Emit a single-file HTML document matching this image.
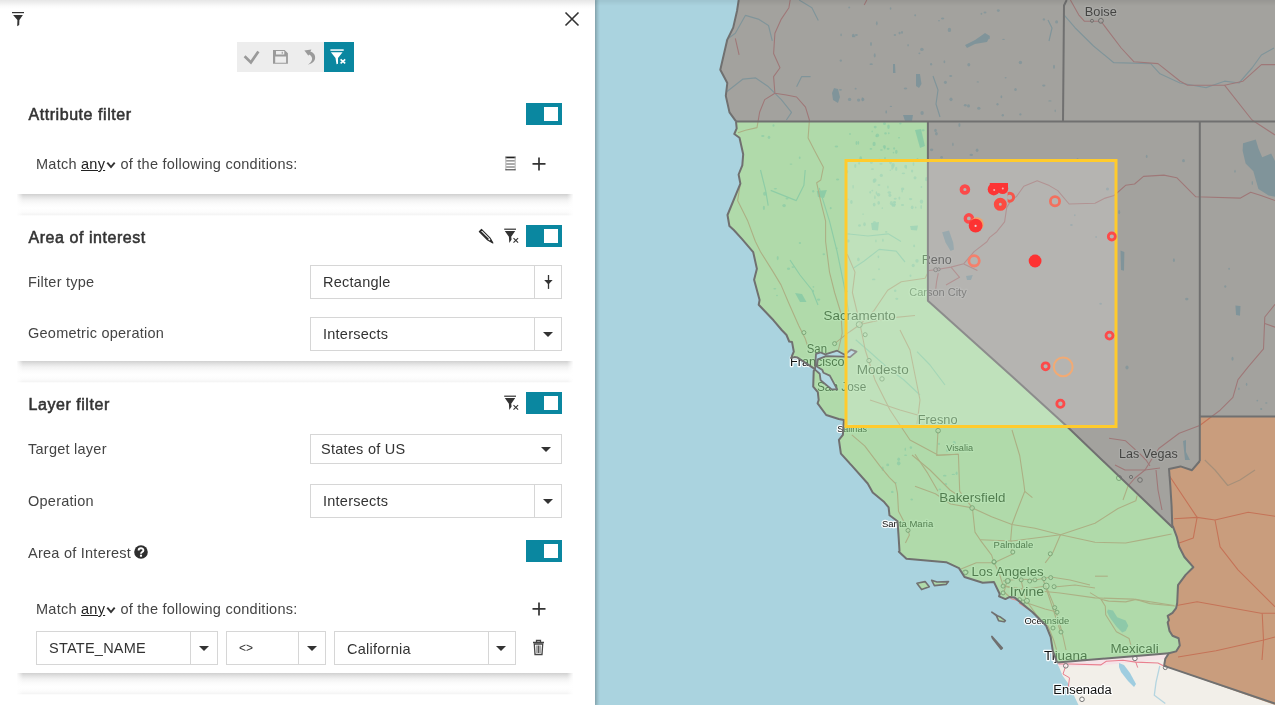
<!DOCTYPE html>
<html><head><meta charset="utf-8">
<style>
*{box-sizing:border-box;margin:0;padding:0}
html,body{width:1275px;height:705px;overflow:hidden;background:#fff;font-family:"Liberation Sans",sans-serif;color:#333}
#panel{position:absolute;left:0;top:0;width:595px;height:705px;background:#fff;z-index:2;box-shadow:1px 0 3px rgba(0,0,0,.15);will-change:transform}
#panel .topsh{position:absolute;left:0;top:0;width:595px;height:9px;background:linear-gradient(#e6e6e6,#fbfbfb 70%,#fff)}
.a{position:absolute;white-space:nowrap}
.t16{font-size:16px;line-height:18px;font-weight:normal;color:#333;letter-spacing:0.55px;-webkit-text-stroke:0.55px #333}
.t14{font-size:14.5px;line-height:16px;color:#444;letter-spacing:0.25px}
.sep{position:absolute;left:17px;width:556px;height:22px;background:linear-gradient(#d0d0d0 0px,#e3e3e3 3px,#f2f2f2 6px,#fbfbfb 10px,#fff 14px,#fcfcfc 18px,#f5f5f5 20.5px,#fff 22px)}
.sep::before{content:"";position:absolute;left:0;top:0;width:6px;height:22px;background:linear-gradient(to right,rgba(255,255,255,.9),rgba(255,255,255,0))}
.sep::after{content:"";position:absolute;right:0;top:0;width:6px;height:22px;background:linear-gradient(to left,rgba(255,255,255,.9),rgba(255,255,255,0))}
.tog{position:absolute;width:36px;height:22px;background:#0a87a0}
.tog::after{content:"";position:absolute;left:18px;top:4px;width:14px;height:14px;background:#fff}
.sel{position:absolute;border:1px solid #d6d6d6;background:#fff}
.sel .dv{position:absolute;top:0;bottom:0;width:1px;background:#d6d6d6}
.car{position:absolute;width:0;height:0;border-left:5px solid transparent;border-right:5px solid transparent;border-top:5px solid #333}
#map{position:absolute;left:595px;top:0;width:680px;height:705px;overflow:hidden;z-index:1;background:#aad3df;will-change:transform}
#mapsh{position:absolute;left:595px;top:0;width:680px;height:6px;z-index:3;background:linear-gradient(rgba(0,0,0,.07),rgba(0,0,0,0))}
</style></head><body>
<div id="panel">
  <div class="topsh"></div>
  <!-- top-left funnel -->
  <svg class="a" style="left:11px;top:11px" width="15" height="17" viewBox="0 0 15 17">
    <rect x="1" y="1" width="12" height="1.2" fill="#333"/>
    <path d="M2.1 3.9 H11.9 L8.4 9 L8.2 13.9 L6.2 15.3 L6.4 9 Z" fill="#333"/>
  </svg>
  <!-- close X -->
  <svg class="a" style="left:564px;top:11px" width="16" height="16" viewBox="0 0 16 16">
    <path d="M1.5 1.5 L14.5 14.5 M14.5 1.5 L1.5 14.5" stroke="#333" stroke-width="1.6" fill="none"/>
  </svg>
  <!-- toolbar -->
  <div class="a" style="left:237px;top:42px;width:87px;height:30px;background:#ededed"></div>
  <div class="a" style="left:324px;top:42px;width:30px;height:30px;background:#0a87a0"></div>
  <svg class="a" style="left:237px;top:42px" width="117" height="30" viewBox="0 0 117 30">
    <path d="M7.6 14.2 L13.9 20.4 L21.4 9.4" stroke="#9a9a9a" stroke-width="2.7" fill="none"/>
    <path fill-rule="evenodd" fill="#9a9a9a" d="M36 7.9 H47.6 L50.9 11.2 V21.8 H36 Z M39 9 H47.3 V12.6 H39 Z M38.2 14.5 H49.1 V20.8 H38.2 Z"/>
    <rect x="44.7" y="9.8" width="1.1" height="2" fill="#9a9a9a"/>
    <path d="M67.4 8.4 L74.4 7.4 L71.4 13.8 Z" fill="#9a9a9a"/>
    <path d="M71 12.3 L72.4 9.3 C 76.8 10.2, 78.6 13.5, 78.1 16.6 C 77.5 19.8, 74.5 22, 70.9 22.8 C 73.6 20.6, 75.3 18.6, 75.1 16.4 C 74.9 14.4, 73.4 12.9, 71 12.3 Z" fill="#9a9a9a"/>
    <rect x="93.4" y="7.3" width="13.3" height="1.5" fill="#fff"/>
    <path d="M93.9 10.3 H105.6 L101 15.9 V21.8 L99.5 22.2 L98.5 15.9 Z" fill="#fff"/>
    <path d="M103.6 17.4 L108.2 21.4 M108.2 17.4 L103.6 21.4" stroke="#fff" stroke-width="1.6"/>
  </svg>

  <!-- Card 1: Attribute filter -->
  <div class="a t16" style="left:28.5px;top:106px">Attribute filter</div>
  <div class="tog" style="left:526px;top:103px"></div>
  <div class="a t14" style="left:36px;top:156px">Match <span style="text-decoration:underline;color:#222">any</span><svg width="10" height="8" viewBox="0 0 10 8" style="margin-left:1px"><path d="M1.3 1.6 L5 6 L8.7 1.6" stroke="#333" stroke-width="1.9" fill="none"/></svg> of the following conditions:</div>
  <svg class="a" style="left:504.5px;top:155.5px" width="11" height="15" viewBox="0 0 11 15">
    <rect x="0.4" y="0.6" width="10.2" height="1.7" fill="#222"/>
    <rect x="0.4" y="0.6" width="0.9" height="13.7" fill="#aaa"/>
    <rect x="9.7" y="0.6" width="0.9" height="13.7" fill="#aaa"/>
    <rect x="0.4" y="13.3" width="10.2" height="1" fill="#333"/>
    <path d="M1.3 4.9 H9.7 M1.3 8 H9.7 M1.3 11 H9.7" stroke="#444" stroke-width="0.9"/>
  </svg>
  <svg class="a" style="left:532px;top:156.5px" width="14" height="14" viewBox="0 0 14 14">
    <path d="M7 0.5 V13.5 M0.5 6.8 H13.5" stroke="#333" stroke-width="1.7"/>
  </svg>
  <div class="sep" style="top:194px"></div>

  <!-- Card 2: Area of interest -->
  <div class="a t16" style="left:28.5px;top:229px">Area of interest</div>
  <svg class="a" style="left:472px;top:222px" width="52" height="26" viewBox="0 0 52 26">
    <path d="M7.3 9.6 L9.5 7.4 L17.9 15.8 L20.9 21 L15.7 18 Z" fill="none" stroke="#2a2a2a" stroke-width="1.1" stroke-linejoin="round"/>
    <path d="M7.3 9.6 L8.4 8.5 L17 17 L15.7 18 Z" fill="#2a2a2a"/>
    <path d="M17.3 19 L20.9 21 L19 17.3 Z" fill="#2a2a2a"/>
    <rect x="32.2" y="6.6" width="11.8" height="1.2" fill="#333"/>
    <path d="M32.8 9.1 H43.2 L39.2 14.7 L39.6 17.6 L37.3 20.9 L36.9 14.7 Z" fill="#333"/>
    <path d="M41.5 16.2 L46.1 20.6 M46.1 16.2 L41.5 20.6" stroke="#333" stroke-width="1.15"/>
  </svg>
  <div class="tog" style="left:526px;top:225px"></div>
  <div class="a t14" style="left:28px;top:274px">Filter type</div>
  <div class="sel" style="left:310px;top:265px;width:252px;height:34px"><div class="dv" style="left:223px"></div></div>
  <div class="a t14" style="left:323px;top:274px;color:#333">Rectangle</div>
  <svg class="a" style="left:543px;top:274px" width="11" height="16" viewBox="0 0 11 16">
    <path d="M5.5 1 V14.9" stroke="#333" stroke-width="1.3"/>
    <path d="M1.2 5.9 H9.6 L5.4 10.4 Z" fill="#333"/>
  </svg>
  <div class="a t14" style="left:28px;top:325px">Geometric operation</div>
  <div class="sel" style="left:310px;top:317px;width:252px;height:34px"><div class="dv" style="left:223px"></div></div>
  <div class="a t14" style="left:323px;top:326px;color:#333">Intersects</div>
  <div class="car" style="left:543px;top:332px"></div>
  <div class="sep" style="top:361px"></div>

  <!-- Card 3: Layer filter -->
  <div class="a t16" style="left:28.5px;top:396px">Layer filter</div>
  <svg class="a" style="left:472px;top:389px" width="52" height="26" viewBox="0 0 52 26">
    <rect x="32.2" y="6.6" width="11.8" height="1.2" fill="#333"/>
    <path d="M32.8 9.1 H43.2 L39.2 14.7 L39.6 17.6 L37.3 20.9 L36.9 14.7 Z" fill="#333"/>
    <path d="M41.5 16.2 L46.1 20.6 M46.1 16.2 L41.5 20.6" stroke="#333" stroke-width="1.15"/>
  </svg>
  <div class="tog" style="left:526px;top:392px"></div>
  <div class="a t14" style="left:28px;top:441px">Target layer</div>
  <div class="sel" style="left:310px;top:434px;width:252px;height:30px"></div>
  <div class="a t14" style="left:321px;top:441px;color:#333">States of US</div>
  <div class="car" style="left:541px;top:447px"></div>
  <div class="a t14" style="left:28px;top:493px">Operation</div>
  <div class="sel" style="left:310px;top:484px;width:252px;height:34px"><div class="dv" style="left:223px"></div></div>
  <div class="a t14" style="left:323px;top:493px;color:#333">Intersects</div>
  <div class="car" style="left:543px;top:499px"></div>
  <div class="a t14" style="left:28px;top:545px">Area of Interest <svg width="14" height="14" viewBox="0 0 14 14" style="vertical-align:-1.4px;margin-left:-1.2px"><circle cx="7" cy="7" r="6.8" fill="#2e2e2e"/><path d="M4.6 5.4 C4.6 2.5 9.4 2.5 9.4 5.2 C9.4 7.1 7 7 7 8.8" stroke="#fff" stroke-width="1.9" fill="none"/><rect x="5.95" y="9.7" width="2.1" height="2" fill="#fff"/></svg></div>
  <div class="tog" style="left:526px;top:540px"></div>
  <div class="a t14" style="left:36px;top:601px">Match <span style="text-decoration:underline;color:#222">any</span><svg width="10" height="8" viewBox="0 0 10 8" style="margin-left:1px"><path d="M1.3 1.6 L5 6 L8.7 1.6" stroke="#333" stroke-width="1.9" fill="none"/></svg> of the following conditions:</div>
  <svg class="a" style="left:532px;top:601.5px" width="14" height="14" viewBox="0 0 14 14">
    <path d="M7 0.5 V13.5 M0.5 6.8 H13.5" stroke="#333" stroke-width="1.7"/>
  </svg>
  <div class="sel" style="left:36px;top:631px;width:182px;height:34px"><div class="dv" style="left:153px"></div></div>
  <div class="a t14" style="left:49px;top:640px;color:#333">STATE_NAME</div>
  <div class="car" style="left:199px;top:646px"></div>
  <div class="sel" style="left:226px;top:631px;width:100px;height:34px"><div class="dv" style="left:71px"></div></div>
  <div class="a" style="left:239px;top:640px;font-size:12px;line-height:16px;color:#333">&lt;&gt;</div>
  <div class="car" style="left:307px;top:646px"></div>
  <div class="sel" style="left:334px;top:631px;width:182px;height:34px"><div class="dv" style="left:153px"></div></div>
  <div class="a t14" style="left:347px;top:641px;color:#333">California</div>
  <div class="car" style="left:496px;top:646px"></div>
  <svg class="a" style="left:532px;top:639px" width="13" height="17" viewBox="0 0 13 17">
    <path d="M1 3.5 H12 M4.5 3.5 V1.5 H8.5 V3.5" stroke="#444" stroke-width="1.3" fill="none"/>
    <path d="M2.3 5 H10.7 L10 15.5 H3 Z" fill="none" stroke="#444" stroke-width="1.3"/>
    <path d="M5 6.5 V14 M6.5 6.5 V14 M8 6.5 V14" stroke="#444" stroke-width="0.9"/>
  </svg>
  <div class="sep" style="top:673px"></div>
</div>

<div id="map">
<svg width="680" height="705" viewBox="595 0 680 705" style="position:absolute;left:0;top:0">
<defs><linearGradient id="lsh" x1="0" x2="1"><stop offset="0" stop-color="#000" stop-opacity=".14"/><stop offset="1" stop-color="#000" stop-opacity="0"/></linearGradient></defs>
<polygon fill="#f2efe9" points="738.7,0 737,11 733.2,27.6 727.3,39.6 720.3,69.7 727.3,83 725.8,95.9 729.5,112.4 736,121.4 736,121.4 736.7,128.4 734.3,134 739.5,137.7 743.2,154.2 742.3,165.3 738.6,174.5 740.4,183.7 727.5,215 729.4,226 733.8,230 742.1,239.2 753.2,252.1 756.9,268.7 754.1,279.8 759.6,300 758.7,304.7 773.5,320.3 781.7,330 786.5,335 789.2,341.5 792,341.9 793.8,351.6 791.1,358 794.3,357.1 797.5,357.6 812.3,367.3 815,369.6 813.7,371 813.2,386.7 817.8,392.2 818.7,400 817.6,403.3 826.2,415 838.7,419 843.9,420 842.9,434.9 838.9,439.8 840.9,453.7 851.8,465.7 867.7,483.5 872.7,492.4 883.6,501.4 888.6,507.3 889.5,515.3 897.5,521.2 898.5,535.1 899.5,551 898.9,551.7 906.4,558.7 946.1,562.2 959,568.1 964.5,577 982.7,582.7 994,582.1 999.7,594 999.1,596.3 1005.4,599.1 1009.9,596.9 1014.4,597.4 1032.6,612.2 1046.2,625.8 1050.7,637.1 1052.8,650.9 1057.2,662.5 1062.6,675.8 1067.9,682.9 1078.5,705 1275,705 1275,0"/>
<g fill="#a0cfe0"><polygon points="965,45 975,40 985,33 990,36 987,42 975,44 967,48"/><polygon points="916,74 920,74 921.5,84 919,88 916,86"/><polygon points="834,88 838,89 840,97 838,103 833,100 832,93"/><polygon points="1243,143.2 1255.8,139.4 1258.4,148.3 1262.2,157.2 1271.2,153.4 1275,161 1275,196.8 1268.6,195.5 1258.4,189.1 1253.3,171.3 1245.6,163.6 1242.6,150.8"/><polygon points="816.7,191 826.9,190 824,198 818,197"/><polygon points="795,293 802,294 806.5,302 800,302"/><polygon points="1235.4,305.5 1240.5,306 1240,315.7 1236,315"/><polygon points="1120.5,250.4 1124.4,252 1124,270.8 1121,270"/><polygon points="903,115 913,115 912,121 905,121"/><polygon points="915,130 921,129 925,146 920,148"/><polygon points="1183,441 1186,440 1186,452 1190,460 1185,460"/><polygon points="893,64 895,64 895.5,73 893,73"/><polygon points="942.1,232.3 949,230.6 953.2,242.6 954,249.4 950.6,251 945.5,242.6"/><polygon points="966,276 972.8,275 971,280 967,280"/><polygon points="910,226 918,225.5 917,230.6 911,230"/><polygon points="871,223 879,222 878,230.6 872,230"/><polygon points="891,203.4 896,204 895,206.8 892,206.5"/></g>
<g fill="#a0cfe0" fill-opacity=".8"><ellipse cx="870.9" cy="148.9" rx="1.4" ry="0.8"/><ellipse cx="887.9" cy="187.1" rx="0.8" ry="1.5"/><ellipse cx="848.0" cy="199.2" rx="0.8" ry="0.8"/><ellipse cx="879.0" cy="269.2" rx="0.8" ry="1.0"/><ellipse cx="895.2" cy="290.7" rx="1.3" ry="1.3"/><ellipse cx="923.1" cy="130.3" rx="1.6" ry="1.1"/><ellipse cx="856.5" cy="143.0" rx="1.0" ry="1.9"/><ellipse cx="859.5" cy="225.5" rx="1.4" ry="1.3"/><ellipse cx="888.8" cy="133.2" rx="0.8" ry="1.0"/><ellipse cx="899.4" cy="198.1" rx="1.0" ry="1.6"/><ellipse cx="881.3" cy="175.4" rx="1.6" ry="1.7"/><ellipse cx="864.5" cy="224.2" rx="1.3" ry="2.0"/><ellipse cx="903.4" cy="173.3" rx="1.8" ry="0.9"/><ellipse cx="878.4" cy="256.8" rx="0.9" ry="1.4"/><ellipse cx="848.1" cy="240.9" rx="1.5" ry="1.6"/><ellipse cx="915.0" cy="177.8" rx="1.5" ry="1.6"/><ellipse cx="891.4" cy="203.2" rx="1.6" ry="2.1"/><ellipse cx="882.9" cy="240.2" rx="0.8" ry="1.8"/><ellipse cx="896.8" cy="298.8" rx="1.6" ry="1.1"/><ellipse cx="875.9" cy="241.0" rx="0.7" ry="1.4"/><ellipse cx="858.4" cy="142.8" rx="0.8" ry="1.9"/><ellipse cx="855.3" cy="166.1" rx="1.1" ry="2.0"/><ellipse cx="851.4" cy="202.0" rx="1.3" ry="2.0"/><ellipse cx="910.5" cy="275.8" rx="1.0" ry="1.3"/><ellipse cx="873.7" cy="279.4" rx="1.8" ry="0.9"/><ellipse cx="859.1" cy="163.3" rx="1.0" ry="1.4"/><ellipse cx="892.1" cy="168.8" rx="0.7" ry="1.3"/><ellipse cx="874.5" cy="222.8" rx="1.7" ry="1.7"/><ellipse cx="886.2" cy="231.9" rx="1.4" ry="0.8"/><ellipse cx="917.0" cy="260.8" rx="1.7" ry="1.9"/><ellipse cx="876.4" cy="193.0" rx="0.8" ry="1.7"/><ellipse cx="850.0" cy="134.0" rx="0.9" ry="0.9"/><ellipse cx="872.2" cy="131.4" rx="0.7" ry="0.9"/><ellipse cx="853.1" cy="186.7" rx="0.7" ry="2.0"/><ellipse cx="894.1" cy="148.4" rx="1.0" ry="1.2"/><ellipse cx="874.1" cy="143.9" rx="1.6" ry="2.2"/><ellipse cx="882.3" cy="208.1" rx="0.8" ry="0.9"/><ellipse cx="872.4" cy="169.1" rx="1.6" ry="0.9"/><ellipse cx="846.8" cy="291.3" rx="1.3" ry="0.9"/><ellipse cx="888.5" cy="126.8" rx="1.3" ry="2.2"/><ellipse cx="914.1" cy="245.9" rx="1.0" ry="1.3"/><ellipse cx="858.4" cy="259.4" rx="1.3" ry="1.9"/><ellipse cx="871.4" cy="161.7" rx="1.6" ry="2.2"/><ellipse cx="913.2" cy="265.5" rx="1.6" ry="1.8"/><ellipse cx="863.1" cy="214.1" rx="1.1" ry="0.7"/><ellipse cx="847.2" cy="171.7" rx="1.0" ry="1.7"/><ellipse cx="921.5" cy="201.6" rx="1.7" ry="2.2"/><ellipse cx="921.4" cy="186.9" rx="0.9" ry="1.0"/><ellipse cx="860.7" cy="158.4" rx="1.4" ry="2.1"/><ellipse cx="912.2" cy="207.3" rx="1.4" ry="1.9"/><ellipse cx="874.9" cy="180.1" rx="1.7" ry="1.9"/><ellipse cx="913.5" cy="164.1" rx="0.9" ry="1.9"/><ellipse cx="889.3" cy="192.5" rx="1.8" ry="1.3"/><ellipse cx="893.3" cy="205.3" rx="1.5" ry="1.0"/><ellipse cx="877.4" cy="135.3" rx="1.7" ry="1.9"/><ellipse cx="878.5" cy="194.7" rx="1.8" ry="1.7"/><ellipse cx="890.3" cy="170.3" rx="0.8" ry="0.7"/><ellipse cx="926.3" cy="179.2" rx="1.3" ry="2.1"/><ellipse cx="895.2" cy="198.7" rx="1.6" ry="1.0"/><ellipse cx="884.6" cy="147.8" rx="1.0" ry="1.6"/><ellipse cx="885.0" cy="158.9" rx="0.8" ry="2.1"/><ellipse cx="890.5" cy="162.3" rx="1.3" ry="2.1"/><ellipse cx="894.4" cy="202.8" rx="1.3" ry="1.5"/><ellipse cx="900.4" cy="123.6" rx="1.2" ry="1.0"/><ellipse cx="870.2" cy="192.3" rx="0.9" ry="1.4"/><ellipse cx="912.1" cy="171.0" rx="1.1" ry="1.5"/><ellipse cx="902.2" cy="191.0" rx="0.8" ry="1.5"/><ellipse cx="884.4" cy="146.4" rx="1.5" ry="1.5"/><ellipse cx="902.6" cy="188.9" rx="1.7" ry="1.4"/><ellipse cx="905.5" cy="166.5" rx="1.3" ry="1.7"/><ellipse cx="896.2" cy="168.9" rx="1.2" ry="2.1"/><ellipse cx="910.6" cy="199.1" rx="1.7" ry="1.1"/><ellipse cx="902.5" cy="205.0" rx="1.6" ry="0.9"/><ellipse cx="877.1" cy="160.9" rx="0.8" ry="1.1"/><ellipse cx="874.2" cy="180.9" rx="1.6" ry="2.0"/><ellipse cx="879.0" cy="185.0" rx="1.4" ry="0.9"/><ellipse cx="921.2" cy="207.1" rx="0.9" ry="2.1"/><ellipse cx="893.1" cy="164.9" rx="1.8" ry="1.9"/><ellipse cx="879.4" cy="160.0" rx="1.3" ry="1.2"/><ellipse cx="881.4" cy="150.0" rx="1.5" ry="0.7"/><ellipse cx="902.1" cy="160.8" rx="0.7" ry="1.2"/><ellipse cx="906.2" cy="167.1" rx="0.8" ry="2.2"/><ellipse cx="915.7" cy="207.5" rx="0.8" ry="1.1"/><ellipse cx="872.3" cy="190.6" rx="1.0" ry="0.9"/><ellipse cx="894.5" cy="202.2" rx="1.6" ry="1.1"/><ellipse cx="878.7" cy="202.9" rx="1.3" ry="1.8"/><ellipse cx="875.2" cy="127.1" rx="1.5" ry="1.3"/><ellipse cx="874.2" cy="204.6" rx="1.4" ry="1.9"/><ellipse cx="874.9" cy="197.3" rx="0.8" ry="2.0"/><ellipse cx="896.3" cy="151.8" rx="1.3" ry="2.1"/><ellipse cx="885.5" cy="133.4" rx="1.3" ry="1.1"/><ellipse cx="876.3" cy="136.2" rx="0.8" ry="1.0"/><ellipse cx="888.1" cy="148.8" rx="1.5" ry="1.1"/><ellipse cx="899.0" cy="137.7" rx="1.1" ry="0.7"/><ellipse cx="884.5" cy="123.4" rx="1.5" ry="1.5"/><ellipse cx="881.0" cy="163.8" rx="1.7" ry="0.9"/><ellipse cx="917.5" cy="160.0" rx="1.2" ry="2.0"/><ellipse cx="892.8" cy="166.6" rx="1.5" ry="2.2"/><ellipse cx="889.9" cy="195.2" rx="1.5" ry="1.7"/><ellipse cx="893.5" cy="152.6" rx="0.8" ry="0.9"/><ellipse cx="855.6" cy="88.7" rx="1.0" ry="0.9"/><ellipse cx="858.6" cy="100.1" rx="1.7" ry="1.7"/><ellipse cx="902.0" cy="32.4" rx="1.0" ry="1.4"/><ellipse cx="874.7" cy="55.4" rx="1.0" ry="2.1"/><ellipse cx="1054.0" cy="66.8" rx="1.0" ry="2.1"/><ellipse cx="908.1" cy="45.3" rx="0.7" ry="1.3"/><ellipse cx="944.4" cy="61.8" rx="0.9" ry="1.5"/><ellipse cx="841.1" cy="34.9" rx="0.8" ry="1.3"/><ellipse cx="849.2" cy="7.5" rx="1.0" ry="1.0"/><ellipse cx="968.8" cy="64.8" rx="1.5" ry="1.7"/><ellipse cx="997.5" cy="104.3" rx="1.1" ry="1.2"/><ellipse cx="1056.6" cy="21.9" rx="1.5" ry="1.7"/><ellipse cx="849.6" cy="99.4" rx="1.7" ry="1.6"/><ellipse cx="1001.4" cy="96.8" rx="0.9" ry="1.5"/><ellipse cx="951.0" cy="99.3" rx="1.6" ry="1.9"/><ellipse cx="968.5" cy="105.9" rx="1.5" ry="1.7"/><ellipse cx="890.6" cy="8.5" rx="0.8" ry="1.2"/><ellipse cx="863.1" cy="99.4" rx="1.3" ry="1.6"/><ellipse cx="977.8" cy="81.9" rx="1.2" ry="0.7"/><ellipse cx="1015.5" cy="89.6" rx="1.3" ry="1.5"/><ellipse cx="985.0" cy="12.5" rx="1.5" ry="1.1"/><ellipse cx="856.4" cy="35.0" rx="1.5" ry="1.0"/><ellipse cx="1002.8" cy="115.3" rx="1.2" ry="1.3"/><ellipse cx="945.4" cy="82.3" rx="1.5" ry="1.6"/><ellipse cx="981.4" cy="13.8" rx="0.9" ry="1.1"/><ellipse cx="1003.5" cy="39.4" rx="1.3" ry="0.7"/><ellipse cx="853.3" cy="35.4" rx="1.4" ry="1.7"/><ellipse cx="988.7" cy="37.9" rx="1.3" ry="1.4"/><ellipse cx="942.6" cy="18.4" rx="1.7" ry="1.0"/><ellipse cx="1055.2" cy="110.8" rx="0.7" ry="1.4"/><ellipse cx="1020.4" cy="114.4" rx="1.2" ry="1.1"/><ellipse cx="886.2" cy="111.9" rx="0.9" ry="1.6"/><ellipse cx="871.2" cy="64.2" rx="1.7" ry="0.9"/><ellipse cx="1020.4" cy="62.5" rx="1.7" ry="1.8"/><ellipse cx="890.9" cy="106.4" rx="1.2" ry="0.7"/><ellipse cx="840.8" cy="60.6" rx="1.2" ry="1.2"/><ellipse cx="871.0" cy="43.9" rx="1.0" ry="2.0"/><ellipse cx="840.4" cy="89.8" rx="1.6" ry="0.9"/><ellipse cx="1043.8" cy="85.6" rx="1.7" ry="1.1"/><ellipse cx="921.9" cy="49.4" rx="1.8" ry="1.6"/><ellipse cx="919.4" cy="53.4" rx="1.0" ry="0.8"/><ellipse cx="862.4" cy="99.3" rx="1.0" ry="2.1"/><ellipse cx="894.9" cy="35.0" rx="1.3" ry="1.0"/><ellipse cx="922.1" cy="113.0" rx="1.7" ry="1.9"/><ellipse cx="978.8" cy="108.2" rx="1.7" ry="1.5"/><ellipse cx="998.3" cy="10.6" rx="1.5" ry="1.4"/><ellipse cx="1005.6" cy="77.8" rx="1.0" ry="0.8"/><ellipse cx="1043.9" cy="19.4" rx="1.2" ry="1.2"/><ellipse cx="905.5" cy="88.5" rx="1.8" ry="1.1"/><ellipse cx="984.3" cy="39.0" rx="1.3" ry="1.3"/><ellipse cx="876.8" cy="23.3" rx="0.9" ry="2.1"/><ellipse cx="949.4" cy="29.9" rx="1.7" ry="2.2"/><ellipse cx="939.0" cy="20.8" rx="0.9" ry="0.8"/><ellipse cx="915.2" cy="15.3" rx="1.0" ry="1.1"/><ellipse cx="965.3" cy="105.3" rx="1.5" ry="1.3"/><ellipse cx="931.1" cy="64.2" rx="1.1" ry="1.2"/><ellipse cx="853.7" cy="36.4" rx="1.8" ry="0.9"/><ellipse cx="950.7" cy="76.1" rx="1.6" ry="1.0"/><ellipse cx="899.6" cy="33.1" rx="1.1" ry="1.4"/><ellipse cx="1049.9" cy="100.9" rx="1.7" ry="0.7"/><ellipse cx="931.6" cy="149.8" rx="1.7" ry="1.4"/><ellipse cx="959.4" cy="125.0" rx="1.1" ry="2.1"/><ellipse cx="971.3" cy="154.9" rx="1.8" ry="1.1"/><ellipse cx="935.5" cy="130.4" rx="1.3" ry="1.7"/><ellipse cx="977.1" cy="150.3" rx="1.4" ry="1.8"/><ellipse cx="952.9" cy="144.3" rx="0.7" ry="1.9"/><ellipse cx="941.6" cy="157.2" rx="1.4" ry="1.2"/><ellipse cx="936.4" cy="133.8" rx="1.4" ry="1.7"/><ellipse cx="769.0" cy="137.3" rx="1.3" ry="1.6"/><ellipse cx="791.0" cy="164.1" rx="1.4" ry="0.7"/><ellipse cx="784.1" cy="205.6" rx="1.8" ry="1.7"/><ellipse cx="830.7" cy="208.2" rx="1.0" ry="1.1"/><ellipse cx="836.8" cy="248.3" rx="1.0" ry="0.7"/><ellipse cx="799.9" cy="243.0" rx="1.2" ry="1.1"/><ellipse cx="813.4" cy="286.9" rx="0.9" ry="0.8"/><ellipse cx="787.0" cy="198.6" rx="1.5" ry="1.0"/><ellipse cx="823.8" cy="254.3" rx="1.3" ry="1.0"/><ellipse cx="837.6" cy="179.6" rx="1.6" ry="1.0"/><ellipse cx="777.7" cy="258.1" rx="1.0" ry="2.1"/><ellipse cx="799.7" cy="157.8" rx="0.9" ry="1.3"/><ellipse cx="813.2" cy="291.0" rx="0.9" ry="1.3"/><ellipse cx="777.0" cy="295.5" rx="0.9" ry="0.8"/><ellipse cx="764.8" cy="193.8" rx="1.7" ry="2.0"/><ellipse cx="818.6" cy="299.6" rx="1.7" ry="1.2"/><ellipse cx="774.8" cy="288.8" rx="1.5" ry="0.7"/><ellipse cx="813.2" cy="191.3" rx="1.1" ry="1.2"/><ellipse cx="773.5" cy="125.5" rx="1.0" ry="1.2"/><ellipse cx="836.4" cy="146.6" rx="1.8" ry="1.0"/><ellipse cx="788.5" cy="268.8" rx="1.6" ry="1.3"/><ellipse cx="763.9" cy="207.9" rx="1.1" ry="2.1"/><ellipse cx="775.4" cy="188.7" rx="1.7" ry="0.7"/><ellipse cx="792.9" cy="267.1" rx="1.5" ry="0.8"/><ellipse cx="762.8" cy="136.0" rx="1.7" ry="1.1"/><ellipse cx="939.8" cy="492.9" rx="1.1" ry="1.1"/><ellipse cx="956.6" cy="473.2" rx="1.0" ry="1.8"/><ellipse cx="905.3" cy="449.3" rx="0.7" ry="1.8"/><ellipse cx="953.3" cy="474.4" rx="1.7" ry="0.7"/><ellipse cx="898.7" cy="463.3" rx="1.8" ry="2.1"/><ellipse cx="910.9" cy="447.6" rx="1.2" ry="1.4"/><ellipse cx="954.2" cy="442.8" rx="1.6" ry="1.8"/><ellipse cx="945.8" cy="484.1" rx="1.4" ry="1.2"/><ellipse cx="905.6" cy="455.3" rx="1.6" ry="0.8"/><ellipse cx="895.8" cy="482.7" rx="1.0" ry="0.8"/><ellipse cx="882.7" cy="468.7" rx="1.1" ry="2.2"/><ellipse cx="950.7" cy="499.1" rx="1.0" ry="0.8"/><ellipse cx="887.7" cy="464.9" rx="1.5" ry="1.4"/><ellipse cx="898.7" cy="459.2" rx="1.4" ry="1.7"/><ellipse cx="939.8" cy="489.3" rx="1.4" ry="0.9"/><ellipse cx="947.3" cy="450.6" rx="1.3" ry="1.3"/><ellipse cx="939.0" cy="443.9" rx="1.0" ry="1.1"/><ellipse cx="892.3" cy="491.9" rx="1.3" ry="1.2"/><ellipse cx="911.7" cy="499.5" rx="1.3" ry="1.0"/><ellipse cx="944.7" cy="475.7" rx="1.8" ry="0.9"/><ellipse cx="1127.0" cy="367.5" rx="1.6" ry="2.1"/><ellipse cx="1074.8" cy="215.2" rx="0.8" ry="1.0"/><ellipse cx="1186.8" cy="299.1" rx="1.7" ry="1.3"/><ellipse cx="1173.9" cy="260.2" rx="1.0" ry="1.9"/><ellipse cx="1183.5" cy="160.7" rx="1.4" ry="1.6"/><ellipse cx="1096.1" cy="236.9" rx="0.9" ry="1.0"/><ellipse cx="1100.6" cy="303.8" rx="1.4" ry="1.0"/><ellipse cx="1071.4" cy="224.9" rx="1.4" ry="1.0"/><ellipse cx="1107.5" cy="189.0" rx="1.6" ry="1.5"/><ellipse cx="1077.6" cy="159.4" rx="1.1" ry="1.5"/><ellipse cx="1146.7" cy="156.4" rx="0.9" ry="1.7"/><ellipse cx="1119.2" cy="212.2" rx="1.0" ry="2.1"/><ellipse cx="1225.3" cy="286.5" rx="1.1" ry="1.3"/><ellipse cx="1261.2" cy="409.0" rx="1.1" ry="1.0"/><ellipse cx="1252.3" cy="183.0" rx="0.7" ry="2.1"/><ellipse cx="1232.5" cy="358.8" rx="1.1" ry="2.0"/><ellipse cx="1235.0" cy="171.3" rx="0.7" ry="1.5"/><ellipse cx="1246.6" cy="384.3" rx="0.8" ry="1.6"/><ellipse cx="1229.1" cy="268.8" rx="0.9" ry="1.1"/><ellipse cx="1238.9" cy="388.8" rx="0.8" ry="1.4"/><ellipse cx="1257.3" cy="400.6" rx="0.9" ry="0.9"/><ellipse cx="1266.3" cy="403.0" rx="1.2" ry="0.8"/></g>
<g fill="none" stroke="#a0cfe0" stroke-width="1.2" stroke-linejoin="round"><polyline points="725.1,40.8 735.3,33.2 745.5,15.3 758.3,19.1 768.5,25.5 772.3,40.8"/><polyline points="726.4,91.9 743,79.1 755.7,77.9 768.5,86.8 781.3,99.6 791.5,112.3 786.4,120"/><polyline points="796.6,86.8 801.7,76.6 810.6,76.6"/><polyline points="799.1,0 811.9,7.7 818.3,20.4"/><polyline points="1064,14.8 1075,27.7 1093.5,46 1113.8,62.7 1150.7,63.6 1160,73.8 1180,83 1206,87.6 1224.5,81.2 1239,83 1252,68 1261.4,55 1274,48"/><polyline points="760.5,170 765.6,190.4 768.2,205.7"/><polyline points="770.7,190.4 796.3,200.6 803.9,185.3 805.2,170"/><polyline points="819.2,187.9 829.5,221.1 837.1,251.7 845,290 850,320"/><polyline points="1048,20 1052,28 1049,41"/><polyline points="933,76 938,90 936,104 940,117"/><polyline points="1204.8,460 1215,470 1227.8,485.5 1240,480 1255,470"/><polyline points="853.6,268.1 863.8,261.3 879.1,249.4 896.2,251.1 905,262"/><polyline points="847.3,233.8 868,236 888.2,233.8 901,241.5"/><polyline points="855.7,339.7 869.6,351.7 889.5,369.5 903.4,379.5 920,395"/><polyline points="917,351.7 930,365 945,385"/><polyline points="790,260 800,275 812,290 818,305"/></g>
<g fill="none" stroke="#e68c92" stroke-width="1.1" stroke-linejoin="round"><polyline points="790.2,0 788.9,7.7 781.3,19.1 774.9,33.2 773.6,53.6 780,67.7 773.6,76.6 774.9,93.2 786.4,95 796.6,97 805.5,107.2 809.4,120 808.1,137.9 814.5,150.6 823.4,167.2 820.8,180 816.7,182.8 820.5,200.6 825.6,221.1 825.6,241.5 829.5,272.1 834.6,292.5 840.9,313 842.2,333.4 838.4,350"/><polyline points="774.9,93.2 764.7,99.6 759.6,112.3 757,127.6 745.5,130.2 737.9,132.8"/><polyline points="735.3,38.3 739.1,54.9"/><polyline points="866.8,0 864.2,5.1"/><polyline points="740.1,185.3 737.6,200.6 747.8,221.1 755.4,241.5 760.5,251.7 773.3,272.1 781,284.9 788.6,302.8 798.8,325.7 805.2,338.5 809,350"/><polyline points="834.6,343.6 847.3,333.4 860.1,324.5 874,310.6 877.4,305.5 887.7,290.2 901.3,281.7 925.1,278.3 928.9,270.5 935.7,269.7 951,267.1 963.8,263.7 974.1,251.6 986.9,241.7 989.7,237.4 996.8,231.7 1004.6,221.8 1006.7,207.6 1011,200.5 1016.7,196.3 1023.8,186.3 1037.2,180.7 1049.3,185.6 1057.8,190.6 1069.1,204 1095,203.2 1105.2,198.1 1114.1,195.5 1125.6,185.3 1134.6,184 1143.5,176.4 1163.9,175.1 1176.7,177.7 1195.8,196.8 1240.5,198.1 1250.7,192.2 1261,195.5 1275,200.6"/><polyline points="860.1,324.5 888.2,318.1 915,315.5"/><polyline points="847.3,254.2 855,272.1 852.4,292.5 860.1,324.5 865.2,350 875,380 890,410 910,440 938,455 958.4,454.3"/><polyline points="938.3,273.1 936.6,281.6 935.7,289.3"/><polyline points="951,267.1 959.6,277.3 946,285"/><polyline points="963.8,264.1 977.4,270.5"/><polyline points="1070.4,0 1078.7,14.8 1084.3,21.2 1100.9,21.2 1121.2,48 1134,61.8 1158,63.6 1180.2,81.2 1187.6,85.2 1224.5,85.2 1243,81.2 1261.4,64.6 1275,64.6"/><polyline points="1224.5,85.2 1252,120 1275,135"/><polyline points="1275,304.3 1264.8,317 1263.5,348.9 1248.2,366.8 1238,379.6 1232.9,397.4 1220.1,410.2 1199.7,425.5 1179.2,433.2 1158.8,448.5 1151.2,460 1145,470 1135,478 1128,486 1123,500"/><polyline points="1264.8,323.4 1275,327.2"/><polyline points="1109,438.3 1125.6,440.8 1139.7,453.6 1146,460 1150,466"/><polyline points="1115,465 1125,470 1145,470 1160,468"/><polyline points="1156,470 1158,490 1162,510"/><polyline points="915,454.3 927.8,473.4 938,491.3"/><polyline points="938,430 936.7,455.5 958.4,454.3 959.7,491.3 972.4,507.9 975,532.1 980.1,539.8 991.6,555.1 994.1,562.8 999.2,573 1003.1,585.7"/><polyline points="915,486.2 935.4,493.8 950.7,504 972.4,507.9"/><polyline points="972.4,507.9 991.6,516.8 1012,524.5 1035,528.3 1060.5,534.7 1095,523.2 1118,508.5 1135.8,500.8 1137.1,495.7"/><polyline points="1012,430 1019.7,455.5 1023.5,481.1 1024.8,491.3 1015.8,514.2 1012,524.5 1010.7,539.8 1012,552.5"/><polyline points="1024.8,491.3 1032.4,497.7"/><polyline points="980.1,539.8 1012,541 1060.5,534.7 1095,542.3 1125.6,543 1146,539.1 1171.6,534"/><polyline points="1060.5,534.7 1052.9,552.5 1045.2,562.8"/><polyline points="961,569.1 976.3,562.8 994.1,562.8 1013.3,553.8"/><polyline points="1095,576.2 1107.8,576.2"/><polyline points="1003.1,585.7 1030,590 1060,593 1095,597.9 1133.3,599.1 1174.1,605.5"/><polyline points="1090,592.6 1101.1,599.4 1108.7,601.1 1125.7,601.9 1136,599.4 1150,603.6 1175,606"/><polyline points="1101.1,599.4 1105.3,606.2 1105.7,614.7 1116.4,631.7 1129.1,638.5 1130.9,645.3"/><polyline points="1019,603 1034,613 1048,626 1054,641 1058,655"/><polyline points="1040,570 1050,600 1060,630"/><polyline points="1003,581 1020,579 1035,580 1051,577 1070,580 1090,585"/><polyline points="1007,581 1004,592 1012,599 1027,603 1045,609 1057,612"/><polyline points="1046,586 1055,608 1062,632 1066,650"/><polyline points="1021,580 1026,600 1040,620"/><polyline points="1054,587 1075,585 1095,588"/><polyline points="1003,586 1020,590 1046,586"/><polyline points="851.8,434.9 864.7,445.8 879.6,465.7 889.5,477.6 895.5,483.5 897.5,493.4 898.5,511.3 907.4,528.2 909.4,535.1 905.4,543"/><polyline points="912,455 930,470 950,490 965,500"/><polyline points="900,330 910,350 920,400 917,424"/><polyline points="870,400 900,410 935,420"/><polyline points="1174.1,518.7 1197.1,517.4 1215,520 1248.2,512.3 1275,516.2"/><polyline points="1169,475.3 1197.1,517.4 1193.3,537.9 1179.2,543"/><polyline points="1215,520 1220.1,546.8 1238,569.8 1261,592.8 1275,606.8"/><polyline points="1176.7,605.5 1197.1,601.7 1261,613.2 1275,613.2"/><polyline points="1262.2,613.2 1263.5,640 1262,660"/><polyline points="1178,657 1216,650.8 1263.8,640 1275,637"/></g>
<polygon points="1057.2,662.5 1168.9,653.3 1166.5,659 1100,665.5 1059,667" fill="#f5e3e8"/>
<polyline points="1058.4,664 1069.5,664 1100.8,664.9 1106.3,661.2 1123,660.3 1135.8,662.1 1158,663 1165.3,666.7" fill="none" stroke="#e9808f" stroke-width="1.1"/>
<polyline points="1065.8,665.8 1063,674 1069.5,677.8 1068,690" fill="none" stroke="#e9808f" stroke-width="1"/>
<polyline points="1135.8,662.1 1137.7,667.6" fill="none" stroke="#e9808f" stroke-width="1"/>
<polygon points="1119,663 1124,665 1130,673 1136,684 1134,687 1128,681 1121,672 1119,667" fill="#9fcde0"/>
<polyline points="1159.8,665.8 1156,682.4 1154.3,695.3 1165.3,703.6" fill="none" stroke="#b5d5e0" stroke-width="1.3"/>
<g fill="#fff" fill-opacity=".6" stroke="#777" stroke-width="1"><circle cx="1092" cy="20.8" r="1.5"/><circle cx="1100.9" cy="20.8" r="2.4"/><circle cx="935.7" cy="269.7" r="2"/><circle cx="938.7" cy="269.3" r="1.5"/><circle cx="859.3" cy="324.5" r="3"/><circle cx="865.2" cy="334.7" r="2"/><circle cx="803.9" cy="332.6" r="2"/><circle cx="834.6" cy="343.6" r="2"/><circle cx="869" cy="360.6" r="2.2"/><circle cx="882" cy="378.9" r="2.2"/><circle cx="938.1" cy="430.7" r="2.3"/><circle cx="972.1" cy="508" r="2.3"/><circle cx="1012.8" cy="552" r="2"/><circle cx="994.1" cy="562.2" r="2"/><circle cx="966.1" cy="572.2" r="2"/><circle cx="1008.2" cy="580.6" r="2"/><circle cx="1050.3" cy="553.8" r="2"/><circle cx="965.1" cy="572.5" r="2.4"/><circle cx="1007.6" cy="581" r="2.5"/><circle cx="1003.1" cy="586.1" r="2"/><circle cx="1003.1" cy="592.9" r="2"/><circle cx="1021.2" cy="579.8" r="2"/><circle cx="1029.7" cy="581" r="2"/><circle cx="1034.9" cy="579.8" r="2"/><circle cx="1043.9" cy="578.7" r="2"/><circle cx="1050.7" cy="577.6" r="2"/><circle cx="1046.2" cy="586.1" r="3"/><circle cx="1054.1" cy="586.7" r="2"/><circle cx="1026.9" cy="600.8" r="2.5"/><circle cx="1022.9" cy="602" r="2"/><circle cx="1019.5" cy="599.7" r="2"/><circle cx="1054.7" cy="607.6" r="2"/><circle cx="1057" cy="612.2" r="2"/><circle cx="1053" cy="628" r="2"/><circle cx="1061" cy="632" r="2"/><circle cx="994" cy="561.7" r="2"/><circle cx="1119" cy="478" r="2.5"/><circle cx="1140" cy="480" r="2.3"/><circle cx="1131" cy="477" r="1.6"/><circle cx="1065.8" cy="665.8" r="2.3"/><circle cx="1082" cy="699.3" r="2.3"/><circle cx="1134.9" cy="658.4" r="2.3"/><circle cx="1165.3" cy="667.6" r="2"/><circle cx="908" cy="530.4" r="2"/></g>
<g font-family="Liberation Sans, sans-serif"><text x="1084.8" y="15.7" font-size="12.5" textLength="32" lengthAdjust="spacingAndGlyphs" fill="#111" stroke="#fff" stroke-width="2.4" stroke-opacity=".9" paint-order="stroke" stroke-linejoin="round">Boise</text><text x="921.7" y="264.4" font-size="12.5" textLength="30" lengthAdjust="spacingAndGlyphs" fill="#111" stroke="#fff" stroke-width="2.4" stroke-opacity=".9" paint-order="stroke" stroke-linejoin="round">Reno</text><text x="909.2" y="296.2" font-size="11" textLength="57.5" lengthAdjust="spacingAndGlyphs" fill="#555" stroke="#fff" stroke-width="2.4" stroke-opacity=".9" paint-order="stroke" stroke-linejoin="round">Carson City</text><text x="1119" y="457.6" font-size="12.5" textLength="58.7" lengthAdjust="spacingAndGlyphs" fill="#111" stroke="#fff" stroke-width="2.4" stroke-opacity=".9" paint-order="stroke" stroke-linejoin="round">Las Vegas</text><text x="823.5" y="319.9" font-size="12.5" textLength="72.3" lengthAdjust="spacingAndGlyphs" fill="#111" stroke="#fff" stroke-width="2.4" stroke-opacity=".9" paint-order="stroke" stroke-linejoin="round">Sacramento</text><text x="806.8" y="352.5" font-size="12" textLength="20.2" lengthAdjust="spacingAndGlyphs" fill="#111" stroke="#fff" stroke-width="2.4" stroke-opacity=".9" paint-order="stroke" stroke-linejoin="round">San</text><text x="790.1" y="366.4" font-size="12" textLength="54.5" lengthAdjust="spacingAndGlyphs" fill="#111" stroke="#fff" stroke-width="2.4" stroke-opacity=".9" paint-order="stroke" stroke-linejoin="round">Francisco</text><text x="856.7" y="373.9" font-size="12.5" textLength="52" lengthAdjust="spacingAndGlyphs" fill="#111" stroke="#fff" stroke-width="2.4" stroke-opacity=".9" paint-order="stroke" stroke-linejoin="round">Modesto</text><text x="817" y="391.4" font-size="12.5" textLength="49.2" lengthAdjust="spacingAndGlyphs" fill="#111" stroke="#fff" stroke-width="2.4" stroke-opacity=".9" paint-order="stroke" stroke-linejoin="round">San Jose</text><text x="837.2" y="431.5" font-size="9" textLength="29.8" lengthAdjust="spacingAndGlyphs" fill="#111" stroke="#fff" stroke-width="2.4" stroke-opacity=".9" paint-order="stroke" stroke-linejoin="round">Salinas</text><text x="917.8" y="424" font-size="12.5" textLength="39.8" lengthAdjust="spacingAndGlyphs" fill="#111" stroke="#fff" stroke-width="2.4" stroke-opacity=".9" paint-order="stroke" stroke-linejoin="round">Fresno</text><text x="946.2" y="451" font-size="9.5" textLength="27" lengthAdjust="spacingAndGlyphs" fill="#111" stroke="#fff" stroke-width="2.4" stroke-opacity=".9" paint-order="stroke" stroke-linejoin="round">Visalia</text><text x="939.3" y="502" font-size="12.5" textLength="66.2" lengthAdjust="spacingAndGlyphs" fill="#111" stroke="#fff" stroke-width="2.4" stroke-opacity=".9" paint-order="stroke" stroke-linejoin="round">Bakersfield</text><text x="882" y="527.2" font-size="9" textLength="51.2" lengthAdjust="spacingAndGlyphs" fill="#111" stroke="#fff" stroke-width="2.4" stroke-opacity=".9" paint-order="stroke" stroke-linejoin="round">Santa Maria</text><text x="993.6" y="548.2" font-size="9" textLength="39.6" lengthAdjust="spacingAndGlyphs" fill="#111" stroke="#fff" stroke-width="2.4" stroke-opacity=".9" paint-order="stroke" stroke-linejoin="round">Palmdale</text><text x="971.4" y="576.3" font-size="12.5" textLength="72.3" lengthAdjust="spacingAndGlyphs" fill="#111" stroke="#fff" stroke-width="2.4" stroke-opacity=".9" paint-order="stroke" stroke-linejoin="round">Los Angeles</text><text x="1009.8" y="595.7" font-size="12.5" textLength="34.1" lengthAdjust="spacingAndGlyphs" fill="#111" stroke="#fff" stroke-width="2.4" stroke-opacity=".9" paint-order="stroke" stroke-linejoin="round">Irvine</text><text x="1024.4" y="624.3" font-size="9" textLength="44.9" lengthAdjust="spacingAndGlyphs" fill="#111" stroke="#fff" stroke-width="2.4" stroke-opacity=".9" paint-order="stroke" stroke-linejoin="round">Oceanside</text><text x="1044" y="659.8" font-size="12.5" textLength="43.4" lengthAdjust="spacingAndGlyphs" fill="#111" stroke="#fff" stroke-width="2.4" stroke-opacity=".9" paint-order="stroke" stroke-linejoin="round">Tijuana</text><text x="1110.4" y="653" font-size="12.5" textLength="48.3" lengthAdjust="spacingAndGlyphs" fill="#111" stroke="#fff" stroke-width="2.4" stroke-opacity=".9" paint-order="stroke" stroke-linejoin="round">Mexicali</text><text x="1053.3" y="693.5" font-size="12.5" textLength="58.4" lengthAdjust="spacingAndGlyphs" fill="#111" stroke="#fff" stroke-width="2.4" stroke-opacity=".9" paint-order="stroke" stroke-linejoin="round">Ensenada</text></g>
<g fill-opacity="0.574">
<polygon fill="#686966" points="738.7,0 737,11 733.2,27.6 727.3,39.6 720.3,69.7 727.3,83 725.8,95.9 729.5,112.4 736,121.4 1275,121.4 1275,0"/>
<polygon fill="#686966" points="927.9,121.4 1199.8,121.4 1199.8,461 1192,470.2 1180.5,466.4 1169,468.9 1170.3,485.5 1171.6,506 1172.3,527.2 1066.8,426.2 1014.4,378.5 927.9,300.7"/>
<polygon fill="#686966" points="1199.8,121.4 1275,121.4 1275,416.4 1199.8,416.4"/>
<polygon fill="#7fca7b" points="927.9,121.4 927.9,300.7 1014.4,378.5 1066.8,426.2 1172.3,527.2 1172.3,527.2 1172.9,526.4 1176.7,536.6 1179.2,546.8 1184.4,557 1193.3,567.2 1185.6,574.9 1178,585.1 1177.2,603 1176.1,608.1 1172.5,612.9 1167.7,615.9 1168.9,620.1 1167.7,622.5 1169.5,631 1172.5,635.8 1178.6,638.2 1179.8,645.4 1176.1,651.4 1168.9,653.3 1057.2,662.5 1052.8,650.9 1050.7,637.1 1046.2,625.8 1032.6,612.2 1014.4,597.4 1009.9,596.9 1005.4,599.1 999.1,596.3 999.7,594 994,582.1 982.7,582.7 964.5,577 959,568.1 946.1,562.2 906.4,558.7 898.9,551.7 899.5,551 898.5,535.1 897.5,521.2 889.5,515.3 888.6,507.3 883.6,501.4 872.7,492.4 867.7,483.5 851.8,465.7 840.9,453.7 838.9,439.8 842.9,434.9 843.9,420 838.7,419 826.2,415 817.6,403.3 818.7,400 817.8,392.2 813.2,386.7 813.7,371 815,369.6 812.3,367.3 797.5,357.6 794.3,357.1 791.1,358 793.8,351.6 792,341.9 789.2,341.5 786.5,335 781.7,330 773.5,320.3 758.7,304.7 759.6,300 754.1,279.8 756.9,268.7 753.2,252.1 742.1,239.2 733.8,230 729.4,226 727.5,215 740.4,183.7 738.6,174.5 742.3,165.3 743.2,154.2 739.5,137.7 734.3,134 736.7,128.4 736,121.4"/>
<polygon fill="#ac602b" points="1199.8,416.4 1275,416.4 1275,705 1164.1,665.9 1164.1,665.9 1165.3,658.7 1168.9,653.3 1176.1,651.4 1179.8,645.4 1178.6,638.2 1172.5,635.8 1169.5,631 1167.7,622.5 1168.9,620.1 1167.7,615.9 1172.5,612.9 1176.1,608.1 1177.2,603 1178,585.1 1185.6,574.9 1193.3,567.2 1184.4,557 1179.2,546.8 1176.7,536.6 1172.9,526.4 1172.3,527.2 1171.6,506 1170.3,485.5 1169,468.9 1180.5,466.4 1192,470.2 1199.8,461"/>
</g>
<polygon fill="#8ec9a9" points="1107.9,609.6 1113,610.4 1117.2,617.2 1125.7,620.6 1128.3,625.7 1125.7,630.9 1122.3,632.6 1116.4,626.6 1109.6,617.2 1107,612.1"/>
<polygon fill="#b3d8e2" stroke="#737373" stroke-width="1.8" stroke-linejoin="round" points="816,353.9 820.6,352.5 825.2,354.4 837.2,350.7 844.6,354.8 851,349.7 856.5,351.6 850,357.1 843.7,356.7 826.1,356.2 817.8,359.4 816.9,366.4 822.4,370.1 823.4,372.8 829.8,375.6 837.2,389.4 831.7,389.4 820.6,380.2 819.7,373.7 815,369.6"/>
<g fill="none" stroke="#707070" stroke-width="2" stroke-linejoin="round"><polyline points="738.7,0 737,11 733.2,27.6 727.3,39.6 720.3,69.7 727.3,83 725.8,95.9 729.5,112.4 736,121.4"/><polyline points="736,121.4 736.7,128.4 734.3,134 739.5,137.7 743.2,154.2 742.3,165.3 738.6,174.5 740.4,183.7 727.5,215 729.4,226 733.8,230 742.1,239.2 753.2,252.1 756.9,268.7 754.1,279.8 759.6,300 758.7,304.7 773.5,320.3 781.7,330 786.5,335 789.2,341.5 792,341.9 793.8,351.6 791.1,358 794.3,357.1 797.5,357.6 812.3,367.3 815,369.6 813.7,371 813.2,386.7 817.8,392.2 818.7,400 817.6,403.3 826.2,415 838.7,419 843.9,420 842.9,434.9 838.9,439.8 840.9,453.7 851.8,465.7 867.7,483.5 872.7,492.4 883.6,501.4 888.6,507.3 889.5,515.3 897.5,521.2 898.5,535.1 899.5,551 898.9,551.7 906.4,558.7 946.1,562.2 959,568.1 964.5,577 982.7,582.7 994,582.1 999.7,594 999.1,596.3 1005.4,599.1 1009.9,596.9 1014.4,597.4 1032.6,612.2 1046.2,625.8 1050.7,637.1 1052.8,650.9 1057.2,662.5"/><polyline points="1057.2,662.5 1168.9,653.3"/><polyline points="736,121.4 1275,121.4"/><polyline points="1066.7,0 1064,5.5 1063,121.4"/><polyline points="927.9,121.4 927.9,300.7 1014.4,378.5 1066.8,426.2 1172.3,527.2"/><polyline points="1199.8,121.4 1199.8,461"/><polyline points="1199.8,416.4 1275,416.4"/><polyline points="1199.8,461 1192,470.2 1180.5,466.4 1169,468.9 1170.3,485.5 1171.6,506 1172.3,527.2 1172.9,526.4 1176.7,536.6 1179.2,546.8 1184.4,557 1193.3,567.2 1185.6,574.9 1178,585.1 1177.2,603 1176.1,608.1 1172.5,612.9 1167.7,615.9 1168.9,620.1 1167.7,622.5 1169.5,631 1172.5,635.8 1178.6,638.2 1179.8,645.4 1176.1,651.4 1168.9,653.3 1165.3,658.7 1164.1,665.9"/><polyline points="1164.1,665.9 1275,703.6"/></g>
<g fill="#b0daaa" stroke="#707070" stroke-width="1.6" stroke-linejoin="round"><polygon points="916.9,583.3 925.1,581.6 929.3,586.8 921.6,589.6"/><polygon points="931.6,580.2 937,582 948.5,581.6 946.1,584.4 934.4,585.6"/><polygon points="991.8,612.2 997.4,615.6 1000.8,617.3 1005.4,620.7 1004.2,621.8 998.6,620.7 996.3,615.6"/><polygon points="991.8,636.4 1002.3,648.1 1001.1,649.2 992.5,638.2"/></g>
<rect x="846" y="160.5" width="270" height="266" fill="#fff" fill-opacity="0.2" stroke="#ffcb2c" stroke-width="3"/>
<g fill="none" stroke="#fc4a4a">
<circle cx="964.9" cy="189.5" r="3.45" stroke-width="3.7"/>
<circle cx="968.9" cy="218.4" r="3.6" stroke-width="3.4"/>
<circle cx="1111.8" cy="236.5" r="3.5" stroke-width="2.8"/>
<circle cx="1109.5" cy="335.6" r="3.5" stroke-width="2.8"/>
<circle cx="1045.6" cy="366.3" r="3.5" stroke-width="2.8"/>
<circle cx="1060.4" cy="403.8" r="3.6" stroke-width="2.8"/>

</g>
<clipPath id="cc"><rect x="1007.6" y="185" width="12" height="20"/></clipPath><circle clip-path="url(#cc)" cx="1009.6" cy="197.2" r="4" fill="none" stroke="#f6564a" stroke-width="3"/>
<circle cx="1000.3" cy="204.3" r="4" fill="none" stroke="#fc4a40" stroke-width="5"/>
<g fill="#fd3535">
<rect x="989.8" y="183" width="18.2" height="6"/>
<circle cx="993.8" cy="189.3" r="6.1"/>
<circle cx="1002.7" cy="188.5" r="5.5"/>
</g>
<circle cx="994.2" cy="190" r="1" fill="#f4b0b0"/><circle cx="1002.8" cy="188.6" r="1" fill="#f4b0b0"/>
<circle cx="976.9" cy="224.1" r="6.8" fill="#f3a068"/>
<circle cx="975.6" cy="225.7" r="6.9" fill="#fd3232"/>
<circle cx="975.6" cy="225.9" r="1.1" fill="#e8d0d0"/>
<circle cx="1055" cy="201.2" r="4.6" fill="none" stroke="#f3705e" stroke-width="2.8"/>
<circle cx="974.1" cy="260.8" r="5.2" fill="none" stroke="#f4806c" stroke-width="2.8"/>
<circle cx="1035.1" cy="261" r="6.4" fill="#fd3232"/>
<circle cx="1063.2" cy="366.9" r="9.4" fill="none" stroke="#f2aa74" stroke-width="2"/>
<rect x="595" y="0" width="5" height="705" fill="url(#lsh)"/>
</svg>
</div>
<div id="mapsh"></div>
</body></html>
